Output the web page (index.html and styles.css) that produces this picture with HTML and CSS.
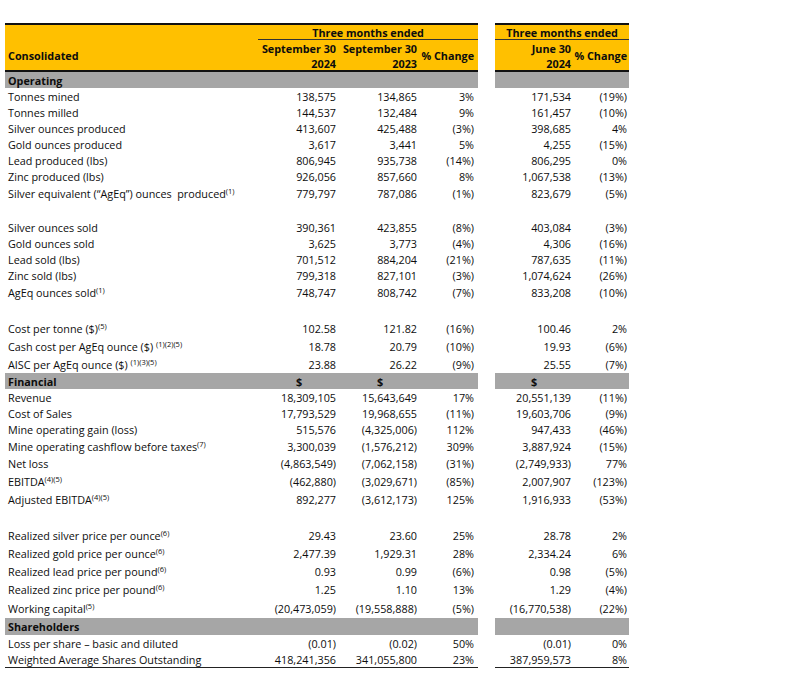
FILE: index.html
```html
<!DOCTYPE html>
<html>
<head>
<meta charset="utf-8">
<link rel="stylesheet" href="styles.css">
</head>
<body>
<div class="wrap">
<table class="fin">
<colgroup>
<col class="c-lbl"><col class="c-a"><col class="c-b"><col class="c-c"><col class="c-sp"><col class="c-d"><col class="c-e">
</colgroup>
<thead>
<tr class="hr1">
<th class="y top"></th>
<th class="y top tme" colspan="3">Three months ended</th>
<th class="sp"></th>
<th class="y top tme" colspan="2">Three months ended</th>
</tr>
<tr class="hr2">
<th class="y lbl bot" rowspan="2">Consolidated</th>
<th class="y a">September 30</th>
<th class="y b">September 30</th>
<th class="y c bot" rowspan="2">% Change</th>
<th class="sp"></th>
<th class="y d">June 30</th>
<th class="y e bot" rowspan="2">% Change</th>
</tr>
<tr class="hr3">
<th class="y a bot">2024</th>
<th class="y b bot">2023</th>
<th class="sp"></th>
<th class="y d bot">2024</th>
</tr>
</thead>
<tbody>
<tr class="r16 sec"><td class="lbl">Operating</td><td></td><td></td><td></td><td class="sp"></td><td></td><td></td></tr>
<tr class="r16"><td class="lbl">Tonnes mined</td><td class="a">138,575</td><td class="b">134,865</td><td class="c">3%</td><td class="sp"></td><td class="d">171,534</td><td class="e">(19%)</td></tr>
<tr class="r16"><td class="lbl">Tonnes milled</td><td class="a">144,537</td><td class="b">132,484</td><td class="c">9%</td><td class="sp"></td><td class="d">161,457</td><td class="e">(10%)</td></tr>
<tr class="r16"><td class="lbl">Silver ounces produced</td><td class="a">413,607</td><td class="b">425,488</td><td class="c">(3%)</td><td class="sp"></td><td class="d">398,685</td><td class="e">4%</td></tr>
<tr class="r16"><td class="lbl">Gold ounces produced</td><td class="a">3,617</td><td class="b">3,441</td><td class="c">5%</td><td class="sp"></td><td class="d">4,255</td><td class="e">(15%)</td></tr>
<tr class="r16"><td class="lbl">Lead produced (lbs)</td><td class="a">806,945</td><td class="b">935,738</td><td class="c">(14%)</td><td class="sp"></td><td class="d">806,295</td><td class="e">0%</td></tr>
<tr class="r16"><td class="lbl">Zinc produced (lbs)</td><td class="a">926,056</td><td class="b">857,660</td><td class="c">8%</td><td class="sp"></td><td class="d">1,067,538</td><td class="e">(13%)</td></tr>
<tr class="r18"><td class="lbl">Silver equivalent (“AgEq”) ounces&nbsp; produced<sup>(1)</sup></td><td class="a">779,797</td><td class="b">787,086</td><td class="c">(1%)</td><td class="sp"></td><td class="d">823,679</td><td class="e">(5%)</td></tr>
<tr class="r17"><td class="lbl"></td><td></td><td></td><td></td><td class="sp"></td><td></td><td></td></tr>
<tr class="r16"><td class="lbl">Silver ounces sold</td><td class="a">390,361</td><td class="b">423,855</td><td class="c">(8%)</td><td class="sp"></td><td class="d">403,084</td><td class="e">(3%)</td></tr>
<tr class="r16"><td class="lbl">Gold ounces sold</td><td class="a">3,625</td><td class="b">3,773</td><td class="c">(4%)</td><td class="sp"></td><td class="d">4,306</td><td class="e">(16%)</td></tr>
<tr class="r16"><td class="lbl">Lead sold (lbs)</td><td class="a">701,512</td><td class="b">884,204</td><td class="c">(21%)</td><td class="sp"></td><td class="d">787,635</td><td class="e">(11%)</td></tr>
<tr class="r16"><td class="lbl">Zinc sold (lbs)</td><td class="a">799,318</td><td class="b">827,101</td><td class="c">(3%)</td><td class="sp"></td><td class="d">1,074,624</td><td class="e">(26%)</td></tr>
<tr class="r18"><td class="lbl">AgEq ounces sold<sup>(1)</sup></td><td class="a">748,747</td><td class="b">808,742</td><td class="c">(7%)</td><td class="sp"></td><td class="d">833,208</td><td class="e">(10%)</td></tr>
<tr class="r18"><td class="lbl"></td><td></td><td></td><td></td><td class="sp"></td><td></td><td></td></tr>
<tr class="r18"><td class="lbl">Cost per tonne ($)<sup>(5)</sup></td><td class="a">102.58</td><td class="b">121.82</td><td class="c">(16%)</td><td class="sp"></td><td class="d">100.46</td><td class="e">2%</td></tr>
<tr class="r18"><td class="lbl">Cash cost per AgEq ounce ($) <sup>(1)(2)(5)</sup></td><td class="a">18.78</td><td class="b">20.79</td><td class="c">(10%)</td><td class="sp"></td><td class="d">19.93</td><td class="e">(6%)</td></tr>
<tr class="r18"><td class="lbl">AISC per AgEq ounce ($) <sup>(1)(3)(5)</sup></td><td class="a">23.88</td><td class="b">26.22</td><td class="c">(9%)</td><td class="sp"></td><td class="d">25.55</td><td class="e">(7%)</td></tr>
<tr class="r16 sec"><td class="lbl">Financial</td><td class="cur">$</td><td class="cur">$</td><td></td><td class="sp"></td><td class="cur">$</td><td></td></tr>
<tr class="r16"><td class="lbl">Revenue</td><td class="a">18,309,105</td><td class="b">15,643,649</td><td class="c">17%</td><td class="sp"></td><td class="d">20,551,139</td><td class="e">(11%)</td></tr>
<tr class="r16"><td class="lbl">Cost of Sales</td><td class="a">17,793,529</td><td class="b">19,968,655</td><td class="c">(11%)</td><td class="sp"></td><td class="d">19,603,706</td><td class="e">(9%)</td></tr>
<tr class="r16"><td class="lbl">Mine operating gain (loss)</td><td class="a">515,576</td><td class="b">(4,325,006)</td><td class="c">112%</td><td class="sp"></td><td class="d">947,433</td><td class="e">(46%)</td></tr>
<tr class="r18"><td class="lbl">Mine operating cashflow before taxes<sup>(7)</sup></td><td class="a">3,300,039</td><td class="b">(1,576,212)</td><td class="c">309%</td><td class="sp"></td><td class="d">3,887,924</td><td class="e">(15%)</td></tr>
<tr class="r17"><td class="lbl">Net loss</td><td class="a">(4,863,549)</td><td class="b">(7,062,158)</td><td class="c">(31%)</td><td class="sp"></td><td class="d">(2,749,933)</td><td class="e">77%</td></tr>
<tr class="r18"><td class="lbl">EBITDA<sup>(4)(5)</sup></td><td class="a">(462,880)</td><td class="b">(3,029,671)</td><td class="c">(85%)</td><td class="sp"></td><td class="d">2,007,907</td><td class="e">(123%)</td></tr>
<tr class="r18"><td class="lbl">Adjusted EBITDA<sup>(4)(5)</sup></td><td class="a">892,277</td><td class="b">(3,612,173)</td><td class="c">125%</td><td class="sp"></td><td class="d">1,916,933</td><td class="e">(53%)</td></tr>
<tr class="r18"><td class="lbl"></td><td></td><td></td><td></td><td class="sp"></td><td></td><td></td></tr>
<tr class="r18"><td class="lbl">Realized silver price per ounce<sup>(6)</sup></td><td class="a">29.43</td><td class="b">23.60</td><td class="c">25%</td><td class="sp"></td><td class="d">28.78</td><td class="e">2%</td></tr>
<tr class="r18"><td class="lbl">Realized gold price per ounce<sup>(6)</sup></td><td class="a">2,477.39</td><td class="b">1,929.31</td><td class="c">28%</td><td class="sp"></td><td class="d">2,334.24</td><td class="e">6%</td></tr>
<tr class="r18"><td class="lbl">Realized lead price per pound<sup>(6)</sup></td><td class="a">0.93</td><td class="b">0.99</td><td class="c">(6%)</td><td class="sp"></td><td class="d">0.98</td><td class="e">(5%)</td></tr>
<tr class="r18"><td class="lbl">Realized zinc price per pound<sup>(6)</sup></td><td class="a">1.25</td><td class="b">1.10</td><td class="c">13%</td><td class="sp"></td><td class="d">1.29</td><td class="e">(4%)</td></tr>
<tr class="r20"><td class="lbl">Working capital<sup>(5)</sup></td><td class="a">(20,473,059)</td><td class="b">(19,558,888)</td><td class="c">(5%)</td><td class="sp"></td><td class="d">(16,770,538)</td><td class="e">(22%)</td></tr>
<tr class="r17 sec"><td class="lbl">Shareholders</td><td></td><td></td><td></td><td class="sp"></td><td></td><td></td></tr>
<tr class="r17"><td class="lbl">Loss per share – basic and diluted</td><td class="a">(0.01)</td><td class="b">(0.02)</td><td class="c">50%</td><td class="sp"></td><td class="d">(0.01)</td><td class="e">0%</td></tr>
<tr class="r16 last"><td class="lbl">Weighted Average Shares Outstanding</td><td class="a">418,241,356</td><td class="b">341,055,800</td><td class="c">23%</td><td class="sp"></td><td class="d">387,959,573</td><td class="e">8%</td></tr>
</tbody>
</table>
</div>
</body>
</html>
```

FILE: styles.css
```css
html, body {
  margin: 0;
  padding: 0;
  background: #ffffff;
}

body {
  font-family: "Open Sans", "Liberation Sans", sans-serif;
  font-size: 10.8px;
  color: #0d0d0d;
}

.wrap {
  padding: 23px 0 0 5px;
}

.fin {
  border-collapse: separate;
  border-spacing: 0;
  table-layout: fixed;
  width: 624px;
}

.c-lbl { width: 253px; }
.c-a { width: 82px; }
.c-b { width: 80px; }
.c-c { width: 58px; }
.c-sp { width: 17px; }
.c-d { width: 78px; }
.c-e { width: 56px; }

.fin th,
.fin td {
  padding: 0;
  line-height: 13px;
  white-space: nowrap;
  vertical-align: middle;
  overflow: visible;
  font-weight: normal;
}

.fin th {
  font-weight: bold;
}

.fin .y {
  background: #ffc000;
}

.fin .top {
  border-top: 2px solid #111;
}

.fin .tme {
  border-bottom: 1px solid #333;
  text-align: center;
}

.fin .bot {
  border-bottom: 2px solid #111;
}

.hr1 { height: 17px; }
.hr2 { height: 16px; }
.hr3 { height: 16px; }

.r16 { height: 16px; }
.r17 { height: 17px; }
.r18 { height: 18px; }
.r20 { height: 20px; }

.fin .lbl {
  text-align: left;
  padding-left: 3px;
}

.fin .a { text-align: right; padding-right: 4px; }
.fin .b { text-align: right; padding-right: 3px; }
.fin .c { text-align: right; padding-right: 4px; }
.fin .d { text-align: right; padding-right: 2px; }
.fin .e { text-align: right; padding-right: 2px; }

.fin .sp {
  background: #ffffff;
  border: none;
}

.sec td {
  background: #a6a6a6;
  font-weight: bold;
}

.sec td.sp {
  background: #ffffff;
}

.fin .cur {
  text-align: center;
}

.last td {
  border-bottom: 1px solid #222;
}

.last td.sp {
  border-bottom: none;
}

sup {
  font-size: 7.5px;
  line-height: 0;
  vertical-align: 4px;
}
```
